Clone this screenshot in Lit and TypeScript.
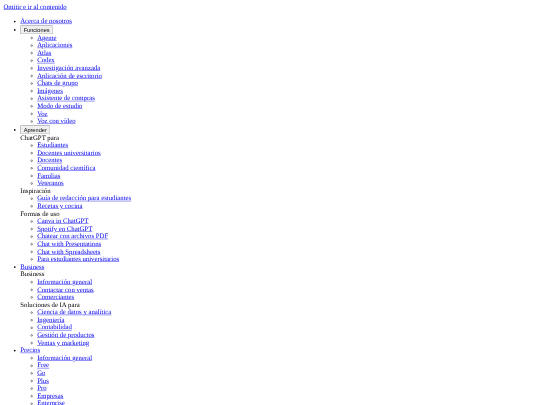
import { LitElement, html, css } from "lit";
import { customElement } from "lit/decorators.js";

const sub = (items: string[]) => html`<ul class="sub">${items.map((i) => html`<li><a href="#">${i}</a></li>`)}</ul>`;

@customElement("app-root")
export class AppRoot extends LitElement {
  static styles = css`
    :host { display: block; width: 540px; height: 405px; overflow: hidden; }
    .page {
      width: 1280px; height: 960px; overflow: hidden; box-sizing: border-box; padding: 8px;
      transform: scale(0.421875); transform-origin: 0 0; filter: blur(1.2px);
      font-family: "Liberation Serif", "Times New Roman", serif; font-size: 16px; color: #000;
      text-rendering: geometricPrecision;
    }
    a { color: #0000ee; }
    .top { margin: 16px 0; padding-left: 40px; list-style: disc; }
    .sub { margin: 0; padding-left: 40px; list-style: circle; }
    button { font: 13.3333px "Liberation Sans", Arial, sans-serif; }
  `;
  render() {
    return html`<div class="page">
      <a href="#">Omitir e ir al contenido</a>
      <ul class="top">
        <li><a href="#">Acerca de nosotros</a></li>
        <li><button>Funciones</button>
          ${sub(["Agente","Aplicaciones","Atlas","Codex","Investigación avanzada","Aplicación de escritorio","Chats de grupo","Imágenes","Asistente de compras","Modo de estudio","Voz","Voz con vídeo"])}
        </li>
        <li><button>Aprender</button>
          <div>ChatGPT para</div>
          ${sub(["Estudiantes","Docentes universitarios","Docentes","Comunidad científica","Familias","Veteranos"])}
          <div>Inspiración</div>
          ${sub(["Guía de redacción para estudiantes","Recetas y cocina"])}
          <div>Formas de uso</div>
          ${sub(["Canva in ChatGPT","Spotify en ChatGPT","Chatear con archivos PDF","Chat with Presentations","Chat with Spreadsheets","Para estudiantes universitarios"])}
        </li>
        <li><a href="#">Business</a>
          <div>Business</div>
          ${sub(["Información general","Contactar con ventas","Comerciantes"])}
          <div>Soluciones de IA para</div>
          ${sub(["Ciencia de datos y analítica","Ingeniería","Contabilidad","Gestión de productos","Ventas y marketing"])}
        </li>
        <li><a href="#">Precios</a>
          ${sub(["Información general","Free","Go","Plus","Pro","Empresas","Enterprise"])}
        </li>
      </ul>
    </div>`;
  }
}
